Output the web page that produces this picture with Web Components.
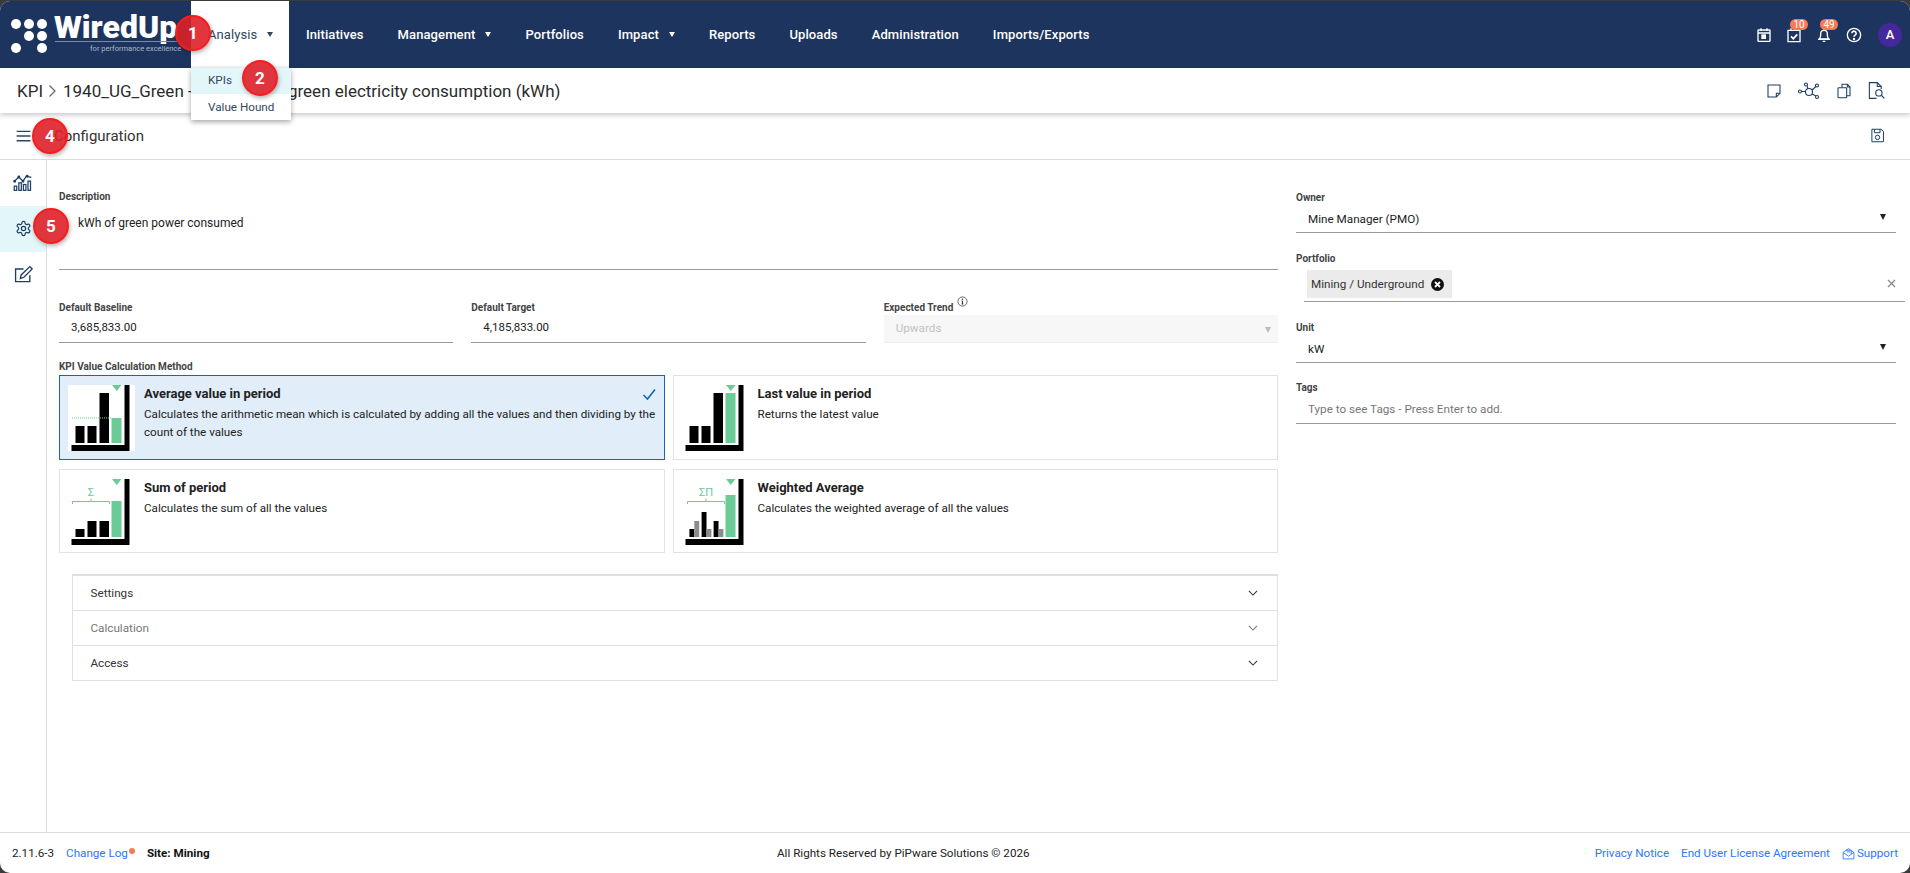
<!DOCTYPE html>
<html lang="en">
<head>
<meta charset="utf-8">
<title>KPI Configuration</title>
<style>
html, body { margin: 0; height: 100%; background: #3b3b3b; overflow: hidden; }
body { font-family: Roboto, "Liberation Sans", sans-serif; color: #222; }
</style>
</head>
<body>
<wu-app>
  <wu-header>
    <wu-nav-item active caret>Analysis</wu-nav-item>
    <wu-nav-item>Initiatives</wu-nav-item>
    <wu-nav-item caret>Management</wu-nav-item>
    <wu-nav-item>Portfolios</wu-nav-item>
    <wu-nav-item caret>Impact</wu-nav-item>
    <wu-nav-item>Reports</wu-nav-item>
    <wu-nav-item>Uploads</wu-nav-item>
    <wu-nav-item>Administration</wu-nav-item>
    <wu-nav-item>Imports/Exports</wu-nav-item>
  </wu-header>
  <wu-breadcrumb></wu-breadcrumb>
  <wu-config-bar></wu-config-bar>
  <wu-body>
    <wu-sidebar></wu-sidebar>
    <wu-form></wu-form>
  </wu-body>
  <wu-footer></wu-footer>
  <wu-dropdown></wu-dropdown>
  <wu-marker n="1" style="left:175px;top:14px"></wu-marker>
  <wu-marker n="2" style="left:242px;top:59px"></wu-marker>
  <wu-marker n="4" style="left:32px;top:117px"></wu-marker>
  <wu-marker n="5" style="left:33px;top:207px"></wu-marker>
</wu-app>

<script>
function tpl(html) {
    const t = document.createElement('template');
    t.innerHTML = html;
    return t;
}

// small base class, clones the template once the attributes are readable
class Base extends HTMLElement {
    connectedCallback() {
        if (this.shadowRoot) return;
        this.attachShadow({ mode: 'open' });
        this.shadowRoot.appendChild(this.constructor.template.content.cloneNode(true));
        if (this.render) this.render();
    }
    $(sel) { return this.shadowRoot.querySelector(sel); }
}

const ICONS = {
    calendar: '<rect x="3" y="4.5" width="18" height="17" rx="1"/><path d="M3 9h18M7.5 2v4M16.5 2v4"/><rect x="9" y="12" width="5" height="5" fill="currentColor"/>',
    tasks: '<path d="M3 5h18v17H3z"/><path d="M7.5 2v4M16.5 2v4"/><path d="M7.5 14l3.5 3.5 6-6.5" stroke-width="2.6"/>',
    bell: '<path d="M5 18c1.4-1.6 2-3 2-6V10a5 5 0 0 1 10 0v2c0 3 .6 4.400 2 6z"/><path d="M3 18.500h18M10 21.500h4M12 2v3"/>',
    help: '<circle cx="12" cy="12" r="10"/><path d="M8.800 9.500a3.200 3.200 0 1 1 4.900 2.700c-1.100.7-1.700 1.300-1.700 2.600" stroke-width="2.400"/><circle cx="12" cy="18" r=".8" fill="currentColor"/>',
    note: '<path d="M3 3h18v12.500L15.500 21H3z"/><path d="M21 15.500h-5.500V21"/>',
    copy: '<path d="M9 7V2h8l4 4v13h-5"/><path d="M17 2v4h4"/><rect x="3" y="7" width="13" height="15" rx="1"/>',
    search: '<path d="M12 22H3V2h10l5 5v3"/><path d="M13 2v5h5"/><circle cx="15" cy="15" r="4"/><path d="M18 18l4 4"/>',
    save: '<path d="M3 2h15l3.500 3.500V22H3z"/><path d="M7 2v5.500h9V2"/><circle cx="12" cy="15" r="3.500"/>',
    menu: '<path d="M1 4.500h22M1 12h22M1 19.500h22"/>',
    chart: '<path d="M2 11l5-5 5 5 4-6 6 1.500"/><circle cx="2" cy="11" r="1" fill="currentColor"/><circle cx="7" cy="6" r="1" fill="currentColor"/><circle cx="12" cy="11" r="1" fill="currentColor"/><circle cx="17" cy="5" r="1" fill="currentColor"/><rect x="1.500" y="17" width="3" height="5"/><rect x="7" y="13" width="3" height="9"/><rect x="12.500" y="15" width="3" height="7"/><rect x="18" y="11" width="3" height="11"/>',
    gear: '<path d="M12.220 2h-.44a2 2 0 0 0-2 2v.18a2 2 0 0 1-1 1.730l-.43.25a2 2 0 0 1-2 0l-.15-.08a2 2 0 0 0-2.730.73l-.22.38a2 2 0 0 0 .73 2.730l.15.1a2 2 0 0 1 1 1.720v.51a2 2 0 0 1-1 1.740l-.15.09a2 2 0 0 0-.73 2.730l.22.38a2 2 0 0 0 2.730.73l.15-.08a2 2 0 0 1 2 0l.43.25a2 2 0 0 1 1 1.730V20a2 2 0 0 0 2 2h.44a2 2 0 0 0 2-2v-.18a2 2 0 0 1 1-1.730l.43-.25a2 2 0 0 1 2 0l.15.08a2 2 0 0 0 2.730-.73l.22-.39a2 2 0 0 0-.73-2.730l-.15-.08a2 2 0 0 1-1-1.740v-.5a2 2 0 0 1 1-1.740l.15-.09a2 2 0 0 0 .73-2.730l-.22-.38a2 2 0 0 0-2.730-.73l-.15.08a2 2 0 0 1-2 0l-.43-.25a2 2 0 0 1-1-1.730V4a2 2 0 0 0-2-2z"/><circle cx="12" cy="12" r="3"/>',
    edit: '<path d="M20 13v8H2V5h10"/><path d="M8 17l1-4.500L20 2l3 3-10.500 10.500z"/>',
    chevron: '<path d="M5 8.500l7 7 7-7"/>',
    mail: '<path d="M2 10l10-7 10 7v12H2z"/><path d="M2 10l10 7 10-7"/><path d="M7 6h10v7M9 9h6"/>',
    info: '<circle cx="12" cy="12" r="10"/><path d="M12 11v6M10 17.500h4M10 11h2" stroke-width="2.200"/><circle cx="12" cy="7" r="1" fill="currentColor"/>'
};
function icon(name, w, h, sw, style) {
    return `<svg xmlns="http://www.w3.org/2000/svg" viewBox="0 0 24 24" width="${w}" height="${h || w}" fill="none" stroke="currentColor" stroke-width="${sw || 1.6}" style="${style || ''}">${ICONS[name]}</svg>`;
}

class WuApp extends Base {
    static template = tpl(`<style>
    :host {
        display: flex;
        flex-direction: column;
        position: relative;
        height: 872px;
        margin-top: 1px;
        background: #fff;
        border-radius: 10px;
        overflow: hidden;
    }
    </style><slot></slot>`);
}

class WuHeader extends Base {
    static template = tpl(`<style>
    :host {
        display: flex;
        align-items: stretch;
        height: 67px;
        background: #1d355e;
        color: #fff;
        flex: none;
    }
    .logo { width: 191px; flex: none; position: relative; overflow: hidden; }
    .dots { position: absolute; left: 11px; top: 17px; }
    .word {
        position: absolute; left: 54px; top: 6px;
        font: 900 32px/40px Roboto, sans-serif;
    }
    .rule { position: absolute; left: 55px; top: 40px; width: 122px; height: 1px; background: #7c8ca8; }
    .sub { position: absolute; left: 90px; top: 43px; font: 400 7.500px/10px Roboto, sans-serif; color: #aab6ca; white-space: nowrap; }
    nav { display: flex; flex: 1; }
    .right { display: flex; align-items: center; padding-right: 8px; height: 67px; }
    .ic { position: relative; display: flex; }
    .badge {
        position: absolute; left: 4px; top: -8px;
        width: 18px; height: 11px; border-radius: 6px;
        background: #f47c55; color: #fff;
        font: 400 10px/11px Roboto, sans-serif; text-align: center;
    }
    .avatar {
        width: 24px; height: 24px; border-radius: 50%;
        background: #45289b; color: #fff;
        font: 500 13px/24px Roboto, sans-serif; text-align: center;
        margin-left: 16px;
    }
    </style>
    <div class="logo">
        <svg class="dots" width="38" height="38" fill="#fff"><circle cx="5" cy="6" r="5"/><circle cx="18" cy="6" r="5"/><circle cx="31" cy="6" r="5"/><circle cx="18" cy="18" r="5"/><circle cx="31" cy="18" r="5"/><circle cx="5" cy="30" r="5"/><circle cx="31" cy="30" r="5"/></svg>
        <div class="word">WiredUp</div>
        <div class="rule"></div>
        <div class="sub">for performance excellence</div>
    </div>
    <nav><slot></slot></nav>
    <div class="right">
        <span class="ic">${icon('calendar', 16, 16, 2)}</span>
        <span class="ic" style="margin-left:14px">${icon('tasks', 16, 16, 2)}<span class="badge">10</span></span>
        <span class="ic" style="margin-left:14px">${icon('bell', 16, 16, 2)}<span class="badge">49</span></span>
        <span class="ic" style="margin-left:14px">${icon('help', 16, 16, 2)}</span>
        <span class="avatar">A</span>
    </div>`);
}

class WuNavItem extends Base {
    static template = tpl(`<style>
    :host {
        display: flex;
        align-items: center;
        padding: 0 17px;
        font-size: 13px;
        font-weight: 500;
        letter-spacing: .1px;
        white-space: nowrap;
        color: #fff;
    }
    :host([active]) { background: #fff; color: #33475b; font-weight: 400; padding-right: 15.500px; }
    .caret { width: 0; height: 0; border: 3.500px solid transparent; border-top: 5px solid currentColor; border-bottom: 0; margin-left: 10px; display: none; }
    :host([caret]) .caret { display: block; }
    </style><slot></slot><span class="caret"></span>`);
}

class WuBreadcrumb extends Base {
    static template = tpl(`<style>
    :host {
        display: flex;
        align-items: center;
        height: 45px;
        flex: none;
        padding: 0 24px 0 17px;
        font-size: 17px;
        color: #2b2b2b;
        background: #fff;
        box-shadow: 0 2px 5px rgba(0,0,0,.22);
        position: relative;
        z-index: 1;
    }
    .sep { margin: 0 6px 0 5px; display: flex; color: #666; }
    .t { flex: 1; white-space: nowrap; }
    .t span { letter-spacing: -1px; }
    .ics { display: flex; align-items: center; color: #1d3f66; }
    </style>
    <span>KPI</span>
    <span class="sep"><svg width="9" height="14" fill="none" stroke="currentColor" stroke-width="1.200"><path d="M1.500 1.500L7 7l-5.500 5.500"/></svg></span>
    <span class="t">1940_UG_Green - <span>Underground</span> green electricity consumption (kWh)</span>
    <span class="ics">
        ${icon('note', 16)}
        <svg style="margin-left:16px" width="22" height="18" viewBox="0 0 22 18" fill="none" stroke="currentColor" stroke-width="1.100"><circle cx="11" cy="10" r="3.500"/><circle cx="8" cy="2.500" r="1.500"/><circle cx="19" cy="3.500" r="1.500"/><circle cx="2" cy="9.500" r="1.500"/><circle cx="19" cy="15" r="1.500"/><path d="M9 4l1 3M14 8l4-3.500M3.500 9.500H7.500M14 12l4 2"/></svg>
        <span style="margin-left:16px;display:flex">${icon('copy', 16)}</span>
        <span style="margin-left:15px;display:flex">${icon('search', 19, 19, 1.400)}</span>
    </span>`);
}

class WuConfigBar extends Base {
    static template = tpl(`<style>
    :host {
        display: flex;
        align-items: center;
        height: 47px;
        box-sizing: border-box;
        flex: none;
        padding: 0 25px 1px 16px;
        border-bottom: 1px solid #dcdcdc;
        font-size: 15px;
        color: #333;
    }
    .burger { display: flex; color: #2c4560; margin-right: 23px; }
    .t { flex: 1; }
    .save { display: flex; color: #1d3f66; }
    </style>
    <span class="burger">${icon('menu', 15, 16, 2.200)}</span>
    <span class="t">Configuration</span>
    <span class="save">${icon('save', 15, 15)}</span>`);
}

class WuBody extends Base {
    static template = tpl(`<style>
    :host { display: flex; flex: 1; min-height: 0; }
    </style><slot></slot>`);
}

class WuSidebar extends Base {
    static template = tpl(`<style>
    :host {
        display: block;
        width: 46px;
        flex: none;
        border-right: 1px solid #dcdcdc;
        color: #1d3f66;
    }
    .i { height: 46px; box-sizing: border-box; padding-bottom: 2px; display: flex; align-items: center; justify-content: center; }
    .on { background: #e3f7fa; }
    </style>
    <div class="i">${icon('chart', 20, 20, 1.500)}</div>
    <div class="i on" style="justify-content:flex-start;padding-left:15px">${icon('gear', 17, 17, 1.700)}</div>
    <div class="i">${icon('edit', 19, 19, 1.700)}</div>`);
}

class WuField extends Base {
    static template = tpl(`<style>
    :host { display: block; box-sizing: border-box; border-bottom: 1px solid #9a9a9a; position: relative; }
    .label { font: 700 10px/12px Roboto, sans-serif; color: #444; display: flex; }
    .value { font-size: 11.700px; line-height: 16px; color: #222; padding-left: 12px; }
    .caret { position: absolute; right: 10px; bottom: 12px; width: 0; height: 0; border: 3.500px solid transparent; border-top: 6px solid #222; border-bottom: 0; display: none; }
    :host([select]) .caret { display: block; }
    :host([placeholder]) .value { color: #777; }
    </style>
    <div class="label"></div>
    <div class="value"><slot></slot></div>
    <span class="caret"></span>`);
    render() {
        this.$('.label').textContent = this.getAttribute('label');
        this.$('.value').style.paddingTop = (this.getAttribute('gap') || 6) + 'px';
    }
}

class WuMethodCard extends Base {
    static template = tpl(`<style>
    :host {
        display: flex;
        gap: 9px;
        box-sizing: border-box;
        padding: 9px 8px;
        border: 1px solid #e0e3e5;
        background: #fff;
        position: relative;
        min-width: 0;
    }
    :host([selected]) { background: #e1edf9; border-color: #1a66ad; }
    svg.pic { flex: none; background: #fff; display: block; }
    .title { font-size: 13px; font-weight: 700; line-height: 18px; color: #222; }
    .desc { font-size: 11.650px; line-height: 18px; color: #222; margin-top: 2px; }
    .check { position: absolute; right: 8px; top: 11px; color: #1a66ad; display: none; }
    :host([selected]) .check { display: block; }
    </style>
    <svg class="pic" width="67" height="66" viewBox="0 0 67 66"></svg>
    <div><div class="title"></div><div class="desc"></div></div>
    <svg class="check" width="14" height="14" fill="none" stroke="currentColor" stroke-width="1.600"><path d="M1.500 8l4 4L13 2.500"/></svg>`);
    render() {
        const kind = this.getAttribute('kind');
        const g = '#6bcb97';
        const bar = (x, w, top, fill) => `<rect x="${x}" y="${top}" width="${w}" height="${58 - top}" fill="${fill || '#000'}"/>`;
        let s = `<path d="M44 0h9.500l-4.750 6z" fill="${g}"/><path d="M56.500 0h5v66H3.500v-6h53z" fill="#000"/>`;
        if (kind === 'avg') {
            s += bar(7.5, 9, 41) + bar(19.5, 9, 41) + bar(31.5, 9.5, 8) + bar(43.5, 10, 33, g);
            s += `<path d="M4 33h40" stroke="${g}" stroke-dasharray="1 1"/>`;
        } else if (kind === 'last') {
            s += bar(7.5, 9, 41) + bar(19.5, 9, 41) + bar(31.5, 9.5, 8) + bar(43.5, 10, 8, g);
        } else if (kind === 'sum') {
            s += bar(7.5, 9, 50) + bar(19.5, 9, 42) + bar(31.5, 9.5, 42) + bar(43.5, 10, 22, g);
            s += `<path d="M4.500 25v-2.500h37V25M23 22.500v-3" fill="none" stroke="${g}"/>`;
            s += `<text x="23" y="17" text-anchor="middle" font-size="11" font-family="Roboto, sans-serif" fill="${g}">Σ</text>`;
        } else {
            s += bar(7.4, 4.9, 50) + bar(12.3, 4.9, 42, '#8c8c8c') + bar(19.6, 4.9, 33) + bar(24.5, 4.9, 50, '#8c8c8c') + bar(31.6, 4.9, 42) + bar(36.5, 4.9, 50, '#8c8c8c') + bar(43.5, 10, 16, g);
            s += `<path d="M5.500 25v-2.500h37V25M24 22.500v-3" fill="none" stroke="${g}"/>`;
            s += `<text x="24" y="17" text-anchor="middle" font-size="11" font-family="Roboto, sans-serif" fill="${g}">ΣΠ</text>`;
        }
        this.$('svg.pic').innerHTML = s;
        this.$('.title').textContent = this.getAttribute('title');
        this.$('.desc').textContent = this.getAttribute('desc');
    }
}

class WuAccordion extends Base {
    static template = tpl(`<style>
    :host {
        display: block;
        margin: 21px 0 0 13px;
        border: 1px solid #e0e0e0;
    }
    .row {
        display: flex; align-items: center; justify-content: space-between;
        height: 34px;
        padding: 0 17px 0 17.500px;
        font-size: 11.700px;
        color: #333;
        border-top: 1px solid #e0e0e0;
    }
    .row:first-child { border-top: 0; }
    .muted { color: #777; }
    </style>
    <div class="row"><span>Settings</span>${icon('chevron', 14, 14, 1.800)}</div>
    <div class="row"><span class="muted">Calculation</span><span class="muted" style="display:flex">${icon('chevron', 14, 14, 1.800)}</span></div>
    <div class="row"><span>Access</span>${icon('chevron', 14, 14, 1.800)}</div>`);
}

class WuForm extends Base {
    static template = tpl(`<style>
    :host {
        display: grid;
        grid-template-columns: 1219px 600px;
        column-gap: 18px;
        padding: 31px 0 0 12px;
        align-content: start;
        font-family: Roboto, sans-serif;
    }
    .row3 { display: grid; grid-template-columns: repeat(3, 1fr); gap: 18px; margin-top: 32px; }
    .cap { font: 700 10px/12px Roboto, sans-serif; color: #444; margin-top: 18px; }
    .cards { display: grid; grid-template-columns: 1fr 1fr; grid-template-rows: 85px 84px; gap: 9px 8px; margin-top: 2px; }
    .right { padding-top: 1px; }
    .trend { position: relative; height: 41px; }
    .trend .l { font: 700 10px/12px Roboto, sans-serif; color: #444; display: flex; }
    .trend .l svg { margin: -6px 0 0 4px; color: #333; }
    .dis {
        position: absolute; left: 0; right: 0; top: 13px; height: 28px;
        background: #f7f7f7; border-bottom: 1px solid #eee;
        font-size: 11.700px; line-height: 27px; color: #c2c2c2; padding-left: 12px;
        box-sizing: border-box;
    }
    .dis i { position: absolute; right: 7px; top: 12px; width: 0; height: 0; border: 3.500px solid transparent; border-top: 6px solid #bbb; border-bottom: 0; }
    .chip {
        display: inline-flex; align-items: center; height: 28px; padding: 0 8px 0 4px;
        background: #ebebeb; color: #333; font-size: 11.700px; gap: 7px;
    }
    .chip svg { display: block; }
    .portfolio { margin: 20px 0; }
    .portfolio .lab { font: 700 10px/12px Roboto, sans-serif; color: #444; }
    .portfolio .box { margin: 5px -9px 0 8px; height: 32px; border-bottom: 1px solid #9a9a9a; position: relative; padding-left: 3px; box-sizing: border-box; }
    .portfolio .clr { position: absolute; right: 9px; top: 9px; color: #888; }
    </style>
    <div class="left">
        <wu-field label="Description" style="height:79px" gap="12"><span style="padding-left:7px;font-size:12px">kWh of green power consumed</span></wu-field>
        <div class="row3">
            <wu-field label="Default Baseline" style="height:41px" gap="5"><span style="font-size:11.500px">3,685,833.00</span></wu-field>
            <wu-field label="Default Target" style="height:41px" gap="5"><span style="font-size:11.500px">4,185,833.00</span></wu-field>
            <div class="trend">
                <div class="l">Expected Trend ${icon('info', 11, 11, 1.600)}</div>
                <div class="dis">Upwards<i></i></div>
            </div>
        </div>
        <div class="cap">KPI Value Calculation Method</div>
        <div class="cards">
            <wu-method-card selected kind="avg" title="Average value in period" desc="Calculates the arithmetic mean which is calculated by adding all the values and then dividing by the count of the values"></wu-method-card>
            <wu-method-card kind="last" title="Last value in period" desc="Returns the latest value"></wu-method-card>
            <wu-method-card kind="sum" title="Sum of period" desc="Calculates the sum of all the values"></wu-method-card>
            <wu-method-card kind="wavg" title="Weighted Average" desc="Calculates the weighted average of all the values"></wu-method-card>
        </div>
        <wu-accordion></wu-accordion>
    </div>
    <div class="right">
        <wu-field label="Owner" select style="height:41px" gap="7">Mine Manager (PMO)</wu-field>
        <div class="portfolio">
            <div class="lab">Portfolio</div>
            <div class="box">
                <span class="chip">Mining / Underground
                    <svg width="13" height="13" viewBox="0 0 13 13"><circle cx="6.500" cy="6.500" r="6.500" fill="#111"/><path d="M4 4l5 5M9 4l-5 5" stroke="#fff" stroke-width="1.800"/></svg>
                </span>
                <svg class="clr" width="9" height="9" stroke="currentColor" stroke-width="1.200"><path d="M1 1l7 7M8 1l-7 7"/></svg>
            </div>
        </div>
        <wu-field label="Unit" select style="height:41px" gap="7">kW</wu-field>
        <wu-field label="Tags" placeholder style="height:42px;margin-top:19px" gap="7">Type to see Tags - Press Enter to add.</wu-field>
    </div>`);
}

class WuFooter extends Base {
    static template = tpl(`<style>
    :host {
        display: grid;
        grid-template-columns: 765px auto 1fr;
        align-items: center;
        height: 40px;
        flex: none;
        padding: 0 12px;
        border-top: 1px solid #dcdcdc;
        font-size: 11.650px;
        color: #222;
    }
    a { color: #2979ff; text-decoration: none; }
    .l { display: flex; align-items: center; }
    .dot { width: 6px; height: 6px; border-radius: 50%; background: #f47c55; margin: -5px 0 0 1px; }
    b { font-weight: 700; margin-left: 12px; color: #111; }
    .r { display: flex; justify-content: flex-end; align-items: center; gap: 12px; }
    .sup { display: flex; align-items: center; gap: 2px; }
    </style>
    <div class="l"><span>2.11.6-3</span><a style="margin-left:12px">Change Log</a><span class="dot"></span><b>Site: Mining</b></div>
    <div>All Rights Reserved by PiPware Solutions © 2026</div>
    <div class="r"><a>Privacy Notice</a><a>End User License Agreement</a><a class="sup">${icon('mail', 13, 13, 1.600)}Support</a></div>`);
}

class WuDropdown extends Base {
    static template = tpl(`<style>
    :host {
        position: absolute; left: 191px; top: 67px; width: 100px; z-index: 5;
        display: block; background: #fff;
        box-shadow: 0 2px 5px rgba(0,0,0,.35);
        font-size: 11.700px; color: #33475b;
    }
    div { height: 26px; line-height: 26px; padding-left: 17px; }
    .on { background: #e3f7fa; line-height: 24px; }
    </style>
    <div class="on">KPIs</div>
    <div>Value Hound</div>`);
}

class WuMarker extends Base {
    static template = tpl(`<style>
    :host {
        position: absolute; z-index: 10;
        width: 36px; height: 36px; box-sizing: border-box;
        border-radius: 50%;
        background: rgba(222,32,40,.9);
        border: 2px solid #f51d1d;
        box-shadow: 1px 2px 4px rgba(0,0,0,.3);
        color: #fff;
        font: 700 17px/32px Roboto, sans-serif;
        text-align: center;
    }
    </style><span></span>`);
    render() { this.$('span').textContent = this.getAttribute('n'); }
}

customElements.define('wu-app', WuApp);
customElements.define('wu-header', WuHeader);
customElements.define('wu-nav-item', WuNavItem);
customElements.define('wu-breadcrumb', WuBreadcrumb);
customElements.define('wu-config-bar', WuConfigBar);
customElements.define('wu-body', WuBody);
customElements.define('wu-sidebar', WuSidebar);
customElements.define('wu-field', WuField);
customElements.define('wu-method-card', WuMethodCard);
customElements.define('wu-accordion', WuAccordion);
customElements.define('wu-form', WuForm);
customElements.define('wu-footer', WuFooter);
customElements.define('wu-dropdown', WuDropdown);
customElements.define('wu-marker', WuMarker);
</script>
</body>
</html>
